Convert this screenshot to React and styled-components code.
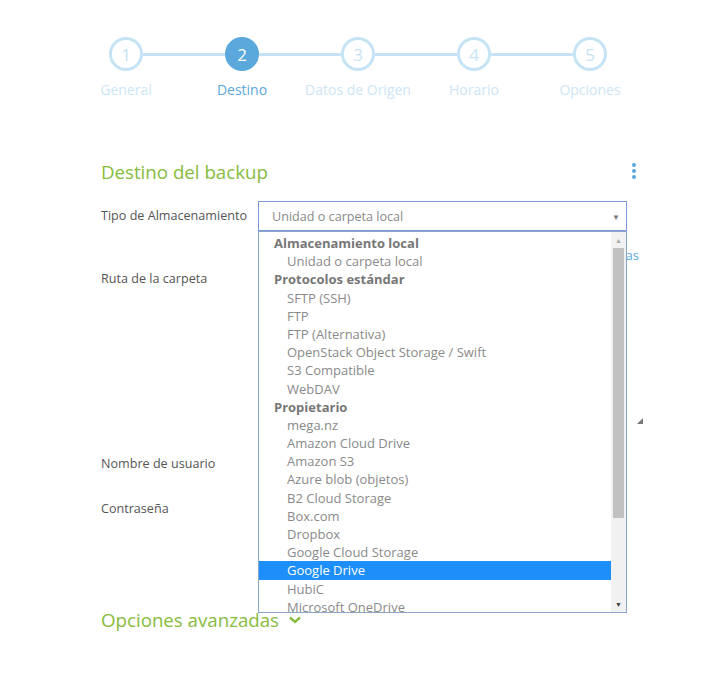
import styled, { createGlobalStyle } from "styled-components";

const GlobalStyle = createGlobalStyle`
  html, body {
    margin: 0;
    padding: 0;
    background: #fff;
    font-family: "Open Sans", "Liberation Sans", sans-serif;
  }
  * { box-sizing: border-box; }
`;

const Page = styled.div`
  width: 728px;
  height: 673px;
  overflow: hidden;
  padding-top: 37px;
`;

const Track = styled.div`
  display: flex;
  align-items: center;
  padding-left: 109px;
`;

const Circle = styled.div`
  width: 34px;
  height: 34px;
  border-radius: 50%;
  border: 3px solid;
  background: ${(p) => (p.$active ? "#5aa8dc" : "#fff")};
  border-color: ${(p) => (p.$active ? "#5aa8dc" : "#c6e3f6")};
  color: ${(p) => (p.$active ? "#fff" : "#c6e3f6")};
  display: flex;
  align-items: center;
  justify-content: center;
  font-size: 17px;
  flex-shrink: 0;
`;

const Connector = styled.div`
  width: 82px;
  height: 3px;
  background: #c6e3f6;
`;

const Labels = styled.div`
  display: grid;
  grid-template-columns: repeat(5, 116px);
  padding-left: 68px;
  margin-top: 9px;
`;

const StepLabel = styled.div`
  text-align: center;
  font-size: 14px;
  line-height: 20px;
  color: ${(p) => (p.$active ? "#5aa8dc" : "#cde5f5")};
`;

const Section = styled.div`
  padding-left: 101px;
  width: 641px;
  margin-top: 57px;
`;

const TitleRow = styled.div`
  display: flex;
  justify-content: space-between;
  align-items: center;
  height: 28px;
`;

const Title = styled.h2`
  margin: 0;
  font-weight: 400;
  font-size: 18.7px;
  color: #86bc3e;
`;

const Kebab = styled.div`
  display: flex;
  flex-direction: column;
  gap: 2px;
  margin-right: 5px;
  span {
    width: 4px;
    height: 4px;
    border-radius: 50%;
    background: #5aa8dc;
  }
`;

const Form = styled.div`
  margin-top: 16px;
`;

const Row = styled.div`
  display: grid;
  grid-template-columns: 157px 1fr;
  align-items: ${(p) => (p.$top ? "start" : "center")};
  margin-top: ${(p) => p.$mt || 0}px;
  position: relative;
`;

const Label = styled.div`
  font-size: 12.6px;
  color: #555;
  line-height: 30px;
`;

const SelectBox = styled.div`
  width: 369px;
  height: 30px;
  border: 1px solid #7c9ad8;
  display: flex;
  align-items: center;
  justify-content: space-between;
  padding: 0 6px 0 13px;
  font-size: 12.6px;
  color: #8a8a8a;
`;

const Caret = styled.span`
  font-size: 8px;
  color: #777;
`;

const LinkRow = styled.div`
  display: flex;
  justify-content: flex-end;
  font-size: 13px;
  color: #5aa8dc;
  line-height: 18px;
  margin-top: 15px;
  padding-right: 2px;
`;

const TextArea = styled.div`
  width: 386px;
  height: 162px;
  position: relative;
`;

const Grip = styled.div`
  position: absolute;
  right: 1px;
  bottom: 2px;
  width: 0;
  height: 0;
  border-left: 6px solid transparent;
  border-bottom: 6px solid #777;
`;

const Input = styled.div`
  width: 369px;
  height: 30px;
  border: 1px solid #ddd;
`;

const Advanced = styled.div`
  margin-top: 83px;
  display: flex;
  align-items: center;
  gap: 9px;
  font-size: 18.7px;
  color: #86bc3e;
`;

const ListBox = styled.div`
  position: absolute;
  left: 157px;
  top: 30px;
  width: 369px;
  height: 382px;
  background: #fff;
  border: 1px solid #8ba6c9;
  display: flex;
  z-index: 10;
`;

const Options = styled.div`
  flex: 1;
  overflow: hidden;
  padding-top: 2px;
  font-size: 13px;
`;

const Option = styled.div`
  height: 18.2px;
  line-height: 18.2px;
  padding-left: ${(p) => (p.$group ? 15 : 28)}px;
  font-weight: ${(p) => (p.$group ? 700 : 400)};
  color: ${(p) => (p.$selected ? "#fff" : p.$group ? "#777" : "#8a8a8a")};
  background: ${(p) => (p.$selected ? "#1e8ffa" : "transparent")};
  white-space: nowrap;
`;

const Scrollbar = styled.div`
  width: 15px;
  background: #f1f1f1;
  display: flex;
  flex-direction: column;
  align-items: center;
`;

const Arrow = styled.div`
  height: 16px;
  display: flex;
  align-items: center;
  justify-content: center;
  font-size: 7px;
  color: ${(p) => (p.$dark ? "#444" : "#a8a8a8")};
`;

const Thumb = styled.div`
  width: 11px;
  height: 270px;
  background: #c1c1c1;
`;

const Spacer = styled.div`
  flex: 1;
`;

const items = [
  ["Almacenamiento local", true],
  ["Unidad o carpeta local"],
  ["Protocolos estándar", true],
  ["SFTP (SSH)"],
  ["FTP"],
  ["FTP (Alternativa)"],
  ["OpenStack Object Storage / Swift"],
  ["S3 Compatible"],
  ["WebDAV"],
  ["Propietario", true],
  ["mega.nz"],
  ["Amazon Cloud Drive"],
  ["Amazon S3"],
  ["Azure blob (objetos)"],
  ["B2 Cloud Storage"],
  ["Box.com"],
  ["Dropbox"],
  ["Google Cloud Storage"],
  ["Google Drive", false, true],
  ["HubiC"],
  ["Microsoft OneDrive"],
];

const steps = ["General", "Destino", "Datos de Origen", "Horario", "Opciones"];

function Chevron() {
  return (
    <svg width="14" height="10" viewBox="0 0 14 10">
      <path d="M2 2.5 L7 7 L12 2.5" fill="none" stroke="#86bc3e" strokeWidth="2.4" />
    </svg>
  );
}

export default function App() {
  return (
    <Page>
      <GlobalStyle />
      <Track>
        {steps.map((s, i) => [
          i > 0 && <Connector key={"c" + i} />,
          <Circle key={s} $active={i === 1}>
            {i + 1}
          </Circle>,
        ])}
      </Track>
      <Labels>
        {steps.map((s, i) => (
          <StepLabel key={s} $active={i === 1}>
            {s}
          </StepLabel>
        ))}
      </Labels>

      <Section>
        <TitleRow>
          <Title>Destino del backup</Title>
          <Kebab>
            <span />
            <span />
            <span />
          </Kebab>
        </TitleRow>

        <Form>
          <Row>
            <Label>Tipo de Almacenamiento</Label>
            <SelectBox>
              Unidad o carpeta local
              <Caret>▼</Caret>
            </SelectBox>
            <ListBox>
              <Options>
                {items.map(([t, g, sel]) => (
                  <Option key={t} $group={g} $selected={sel}>
                    {t}
                  </Option>
                ))}
              </Options>
              <Scrollbar>
                <Arrow>▲</Arrow>
                <Thumb />
                <Spacer />
                <Arrow $dark>▼</Arrow>
              </Scrollbar>
            </ListBox>
          </Row>
          <LinkRow>Explorar carpetas</LinkRow>
          <Row $top>
            <Label>Ruta de la carpeta</Label>
            <TextArea>
              <Grip />
            </TextArea>
          </Row>
          <Row $mt={23}>
            <Label>Nombre de usuario</Label>
            <Input />
          </Row>
          <Row $mt={15}>
            <Label>Contraseña</Label>
            <Input />
          </Row>
        </Form>

        <Advanced>
          Opciones avanzadas
          <Chevron />
        </Advanced>
      </Section>
    </Page>
  );
}
